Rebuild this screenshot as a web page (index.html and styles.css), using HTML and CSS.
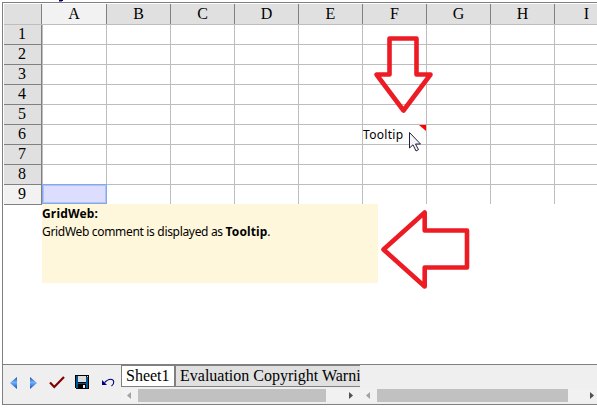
FILE: index.html
```html
<!DOCTYPE html>
<html lang="en">
<head>
<meta charset="utf-8">
<title>GridWeb</title>
<link rel="stylesheet" href="styles.css">
</head>
<body>
<div class="above"><svg width="6" height="2" viewBox="0 0 6 2"><path d="M0 .5h4M0 1h3" stroke="#000080"/></svg></div>
<main class="gridweb">
  <div class="sheet">
    <div class="row head"><div class="corner"></div><div class="col active">A</div><div class="col">B</div><div class="col">C</div><div class="col">D</div><div class="col">E</div><div class="col">F</div><div class="col">G</div><div class="col">H</div><div class="col">I</div></div>
    <div class="row"><div class="num">1</div><div class="cells"></div></div>
    <div class="row"><div class="num">2</div><div class="cells"></div></div>
    <div class="row"><div class="num">3</div><div class="cells"></div></div>
    <div class="row"><div class="num">4</div><div class="cells"></div></div>
    <div class="row"><div class="num">5</div><div class="cells"></div></div>
    <div class="row"><div class="num">6</div><div class="cells"><div class="cell noted"><span class="tooltip-text">Tooltip</span></div></div></div>
    <div class="row"><div class="num">7</div><div class="cells"></div></div>
    <div class="row"><div class="num">8</div><div class="cells"></div></div>
    <div class="row"><div class="num active">9</div><div class="cells last"><div class="selected"></div></div></div>
    <div class="comment">
      <p><b class="author">GridWeb:</b></p>
      <p class="message">GridWeb comment is displayed as <b>Tooltip</b>.</p>
    </div>
  </div>
  <footer class="bar">
    <div class="tools">
      <svg class="prev" width="8" height="12" viewBox="0 0 8 12"><defs><linearGradient id="blue" x2="0" y2="1"><stop stop-color="#1c4ca8"/><stop offset=".45" stop-color="#72b1fa"/><stop offset="1" stop-color="#174bb9"/></linearGradient></defs><path d="M7 0v12L0 6z" fill="url(#blue)"/></svg>
      <svg class="next" width="8" height="12" viewBox="0 0 8 12"><path d="M0 0v12l7-6z" fill="url(#blue)"/></svg>
      <svg class="check" width="16" height="13" viewBox="0 0 16 13"><path d="M1 6.500l4.300 4.500L15 1" fill="none" stroke="#800000" stroke-width="2.200"/></svg>
      <svg class="save" width="14" height="14" viewBox="0 0 14 14" shape-rendering="crispEdges"><path d="M0 0h14v14H1L0 13z" fill="#000"/><path d="M1 1h2v7h8V2h2v11h-2V9H3v4H1z" fill="#00568f"/><path d="M3 1h8v6H3zM12 1h1v1h-1z" fill="#dcdcdc"/><path d="M8 10h2v3H8z" fill="#e8e8e8"/></svg>
      <svg class="undo" width="13" height="9" viewBox="0 0 13 9"><path d="M0 2v5h5z" fill="#000080"/><path d="M2.500 4.700C5 2 7 1.200 8.500 1.200c4 0 4.300 4.300 1 6.800" fill="none" stroke="#000080" stroke-width="1.100"/></svg>
    </div>
    <div class="tabs-side">
      <div class="tabs"><div class="tab current">Sheet1</div><div class="tab">Evaluation Copyright Warning</div></div>
      <div class="scroll"><i class="left"></i><span class="thumb"></span><i class="right"></i></div>
    </div>
    <div class="scroll main-scroll"><i class="left"></i><span class="thumb"></span><i class="right"></i></div>
  </footer>
</main>
<svg class="marks" width="597" height="411" viewBox="0 0 597 411">
  <path d="M419 125h7v6z" fill="#f00"/>
  <g fill="none" stroke="#ed1c24" stroke-width="4.600" stroke-linejoin="round"><path d="M389.500 38.500h27v36h14L403.500 110.500 376.500 74.500h13z"/><path d="M424.700 212.500v18H467v37h-42.300v19L383.500 249.500z"/></g>
  <path d="M409.500 132.500v15.500l3.500-3.200 3 6.200 2.500-1.300-3-5.700h5z" fill="#f4f4f8" stroke="#22223a" stroke-width="1"/>
</svg>
</body>
</html>
```
FILE: styles.css
```css
* { box-sizing: border-box; }
body { margin: 0; width: 597px; height: 411px; overflow: hidden; background: #fff; color: #000; font: 16px/20px "Liberation Serif", serif; }
p { margin: 0; }
.above { height: 2px; padding-left: 59px; }
.above svg { display: block; }
.gridweb { margin-left: 2px; height: 403px; border: solid #808080; border-width: 1px 0 1px 1px; overflow: hidden; }
.sheet { height: 361px; padding: 1px 0 0 1px; overflow: hidden; }
.row { display: flex; height: 20px; }
.head { height: 21px; border-bottom: 1px solid #bdbdbd; }
.corner, .num { flex: none; width: 38px; background: #e0e0e0; border-right: 1px solid #808080; }
.num { height: 20px; line-height: 18px; padding-right: 1px; border-bottom: 1px solid #808080; text-align: center; }
.col { flex: none; width: 64px; background: #e0e0e0; border-right: 1px solid #808080; text-align: center; }
.col.active { width: 65px; }
.num.active, .col.active { background: #f2f2f2; }
.cells { flex: 1; display: flex; border-left: 1px solid #bdbdbd; border-bottom: 1px solid #bdbdbd; background: repeating-linear-gradient(90deg, transparent 0 63px, #bdbdbd 63px 64px); }
.cells.last { height: 19px; border-bottom: 0; }
.selected { width: 65px; height: 20px; margin: -1px 0 0 -1px; border: 1px solid #82a9ec; background: #ddf; box-shadow: inset 0 0 0 1px #b0c3f5; }
.cell { width: 63px; height: 19px; margin-left: 320px; font: 12px/19px "Noto Sans", sans-serif; }
.tooltip-text { display: inline-block; letter-spacing: .3px; }
.comment { width: 336px; height: 79px; margin: -1px 0 0 38px; padding-top: 1px; background: #fff7dc; font: 12px/18px "Noto Sans", sans-serif; }
.author { letter-spacing: .18px; }
.message { letter-spacing: -.32px; }
.message b { letter-spacing: .1px; }
.bar { display: flex; height: 40px; border-top: 1px solid #808080; background: #efefef; }
.tools { flex: none; width: 118px; padding: 0 6px 0 8px; display: flex; align-items: center; }
.tools svg { flex: none; }
.prev { margin-left: -1px; margin-top: -4px; }
.next { margin: -4px 0 0 12px; }
.check { margin: -5px 0 0 11px; }
.save { margin: -5px 0 0 10px; }
.undo { margin: -4px 0 0 13px; }
.tabs-side { flex: none; width: 239px; }
.tabs { display: flex; height: 22px; overflow: hidden; }
.tab { flex: none; height: 22px; padding: 0 4px; border: 1px solid #808080; background: #e0e0e0; line-height: 20px; white-space: nowrap; }
.tab.current { width: 54px; background: #fff; }
.scroll { display: flex; height: 13px; margin-top: 2px; padding: 0 7px 0 6px; justify-content: space-between; align-items: center; background: #f1f1f1; }
.thumb { width: 188px; height: 13px; background: #c1c1c1; margin: 0 17px 0 0; }
.left, .right { width: 4px; height: 7px; background: #a3a3a3; clip-path: polygon(100% 0, 100% 100%, 0 50%); }
.right { background: #505050; clip-path: polygon(0 0, 0 100%, 100% 50%); }
.main-scroll { flex: 1; margin-top: 24px; padding: 0 3px 0 6px; }
.main-scroll .thumb { width: 191px; margin: 0 15px 0 0; }
.marks { position: absolute; left: 0; top: 0; }
```
